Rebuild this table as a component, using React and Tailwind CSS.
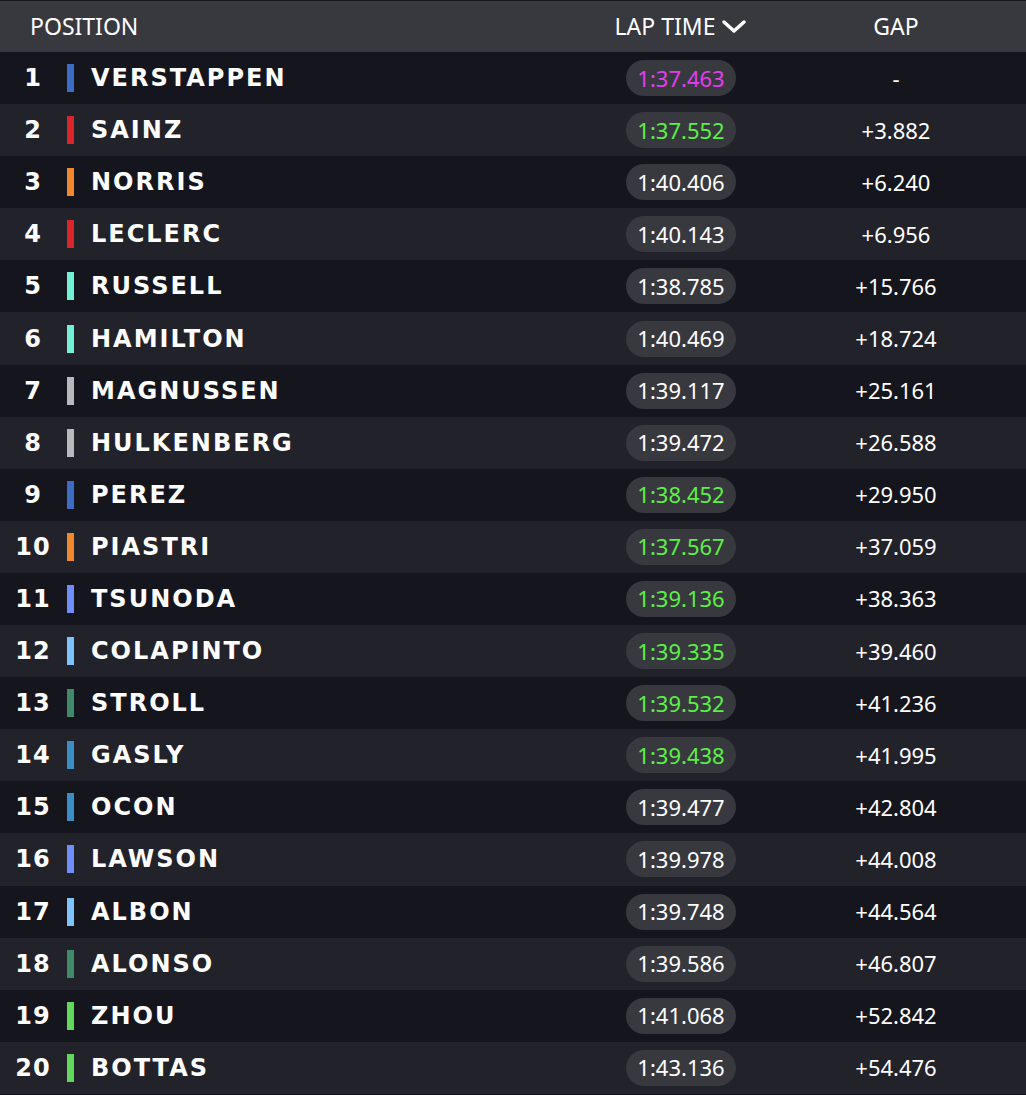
const rows = [
  { pos: 1, name: 'VERSTAPPEN', team: '#3d6cc5', lap: '1:37.463', kind: 'best', gap: '-' },
  { pos: 2, name: 'SAINZ', team: '#d8262b', lap: '1:37.552', kind: 'pb', gap: '+3.882' },
  { pos: 3, name: 'NORRIS', team: '#f0892d', lap: '1:40.406', gap: '+6.240' },
  { pos: 4, name: 'LECLERC', team: '#d8262b', lap: '1:40.143', gap: '+6.956' },
  { pos: 5, name: 'RUSSELL', team: '#72f0d6', lap: '1:38.785', gap: '+15.766' },
  { pos: 6, name: 'HAMILTON', team: '#72f0d6', lap: '1:40.469', gap: '+18.724' },
  { pos: 7, name: 'MAGNUSSEN', team: '#b9b9bd', lap: '1:39.117', gap: '+25.161' },
  { pos: 8, name: 'HULKENBERG', team: '#b9b9bd', lap: '1:39.472', gap: '+26.588' },
  { pos: 9, name: 'PEREZ', team: '#3d6cc5', lap: '1:38.452', kind: 'pb', gap: '+29.950' },
  { pos: 10, name: 'PIASTRI', team: '#f0892d', lap: '1:37.567', kind: 'pb', gap: '+37.059' },
  { pos: 11, name: 'TSUNODA', team: '#6f8dfd', lap: '1:39.136', kind: 'pb', gap: '+38.363' },
  { pos: 12, name: 'COLAPINTO', team: '#7dc4fc', lap: '1:39.335', kind: 'pb', gap: '+39.460' },
  { pos: 13, name: 'STROLL', team: '#3f8a69', lap: '1:39.532', kind: 'pb', gap: '+41.236' },
  { pos: 14, name: 'GASLY', team: '#3b8dc6', lap: '1:39.438', kind: 'pb', gap: '+41.995' },
  { pos: 15, name: 'OCON', team: '#3b8dc6', lap: '1:39.477', gap: '+42.804' },
  { pos: 16, name: 'LAWSON', team: '#6f8dfd', lap: '1:39.978', gap: '+44.008' },
  { pos: 17, name: 'ALBON', team: '#7dc4fc', lap: '1:39.748', gap: '+44.564' },
  { pos: 18, name: 'ALONSO', team: '#3f8a69', lap: '1:39.586', gap: '+46.807' },
  { pos: 19, name: 'ZHOU', team: '#61d85b', lap: '1:41.068', gap: '+52.842' },
  { pos: 20, name: 'BOTTAS', team: '#61d85b', lap: '1:43.136', gap: '+54.476' },
]

const lapColor = {
  best: 'text-[#e23ef0]',
  pb: 'text-[#5cf046]',
}

const uiFont = { fontFamily: '"Noto Sans", "Open Sans", sans-serif' }
const nameFont = { fontFamily: '"DejaVu Sans", Verdana, sans-serif' }

function Chevron() {
  return (
    <svg width="26" height="16" viewBox="0 0 26 16" className="ml-[6px] mt-[1px]">
      <path d="M3 3 L13 12 L23 3" fill="none" stroke="white" strokeWidth="3.5" strokeLinecap="round" strokeLinejoin="round" />
    </svg>
  )
}

export default function App() {
  return (
    <div className="w-[1026px] h-[1095px] bg-[#15151d] text-white" style={uiFont}>
      <div className="flex items-center h-[52px] bg-[#38383f] border-t border-[#18181c]">
        <div className="w-[576px] pl-[30px] text-[23px] leading-none">POSITION</div>
        <div className="w-[210px] flex items-center justify-center text-[23px] leading-none">
          LAP TIME
          <Chevron />
        </div>
        <div className="flex-1 text-center text-[23px] leading-none pr-[20px]">GAP</div>
      </div>
      {rows.map((r, i) => (
        <div
          key={r.pos}
          className={`flex items-center h-[52.1px] ${i % 2 === 1 ? 'bg-[#22222a]' : 'bg-[#15151d]'}`}
        >
          <div className="w-[66px] text-center text-[24px] font-bold leading-none tracking-[1px]" style={nameFont}>
            {r.pos}
          </div>
          <div className="w-[7px] h-[28px] ml-[1px]" style={{ backgroundColor: r.team }} />
          <div
            className="w-[502px] pl-[17px] text-[24px] font-bold leading-none tracking-[2px]"
            style={nameFont}
          >
            {r.name}
          </div>
          <div className="w-[210px] flex justify-center">
            <div
              className={`w-[110px] h-[36px] rounded-full bg-[#38383f] flex items-center justify-center text-[22px] ${lapColor[r.kind] || 'text-white'}`}
            >
              {r.lap}
            </div>
          </div>
          <div className="flex-1 text-center text-[22px] pr-[20px]">{r.gap}</div>
        </div>
      ))}
    </div>
  )
}
